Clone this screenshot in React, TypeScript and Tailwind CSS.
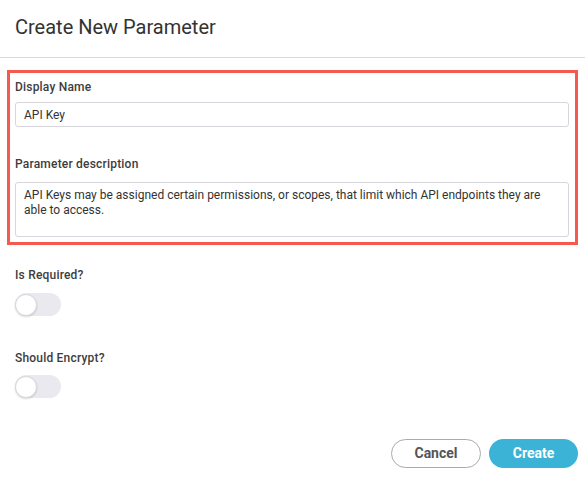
import { useState } from 'react';

function Toggle({ on, onChange }: { on: boolean; onChange: (v: boolean) => void }) {
  return (
    <button
      type="button"
      onClick={() => onChange(!on)}
      className={[
        'relative h-[23px] w-[46px] rounded-full transition',
        on ? 'bg-[#3bb3d6]' : 'bg-[#e9e9ef]',
      ].join(' ')}
    >
      <span
        className={[
          'absolute top-[0.5px] h-[22px] w-[22px] rounded-full border border-[#d8d8de] bg-white shadow-[0_1px_2px_rgba(0,0,0,0.15)] transition',
          on ? 'left-[24px]' : 'left-0',
        ].join(' ')}
      />
    </button>
  );
}

export default function App() {
  const [required, setRequired] = useState(false);
  const [encrypt, setEncrypt] = useState(false);

  return (
    <div className="min-h-screen bg-white font-['Roboto',sans-serif] text-[#333]">
      {/* Header */}
      <header className="flex h-[58px] items-center border-b border-[#d9d9d9] pl-[15px] pb-[4px]">
        <h1 className="text-[20px] font-normal text-[#333]">Create New Parameter</h1>
      </header>

      <div className="px-[7px] pt-[12px]">
        {/* Highlighted fields */}
        <div className="border-[3px] border-[#f45b4e] px-[5px] pr-[6px] pt-[6px] pb-[5px]">
          <div className="text-[12px] font-medium leading-4 tracking-[0.2px] text-[#3d3d3d]">Display Name</div>
          <input
            readOnly
            value="API Key"
            className="mt-[7px] block h-[25px] w-full rounded-[3px] border border-[#d6d6dc] px-[8px] text-[12px] text-[#333] outline-none"
          />

          <div className="mt-[29px] text-[12px] font-medium leading-4 tracking-[0.2px] text-[#3d3d3d]">
            Parameter description
          </div>
          <textarea
            readOnly
            value="API Keys may be assigned certain permissions, or scopes, that limit which API endpoints they are able to access."
            className="mt-[10px] block h-[55px] w-full resize-none rounded-[3px] border border-[#d6d6dc] px-[8px] pt-[5px] text-[12px] leading-[15px] text-[#333] outline-none"
          />
        </div>

        <div className="px-[8px]">
          <div className="mt-[22px] text-[12px] font-medium leading-4 tracking-[0.2px] text-[#3d3d3d]">Is Required?</div>
          <div className="mt-[10px] flex">
            <Toggle on={required} onChange={setRequired} />
          </div>

          <div className="mt-[34px] text-[12px] font-medium leading-4 tracking-[0.2px] text-[#3d3d3d]">Should Encrypt?</div>
          <div className="mt-[9px] flex">
            <Toggle on={encrypt} onChange={setEncrypt} />
          </div>
        </div>

        {/* Footer */}
        <div className="mt-[41px] flex justify-end gap-[8px]">
          <button className="h-[29px] w-[90px] rounded-full border border-[#a9a9b0] bg-white text-[14px] font-bold text-[#555]">
            Cancel
          </button>
          <button className="h-[29px] w-[89px] rounded-full bg-[#3bb3d6] text-[14px] font-bold text-white">
            Create
          </button>
        </div>
      </div>
    </div>
  );
}
